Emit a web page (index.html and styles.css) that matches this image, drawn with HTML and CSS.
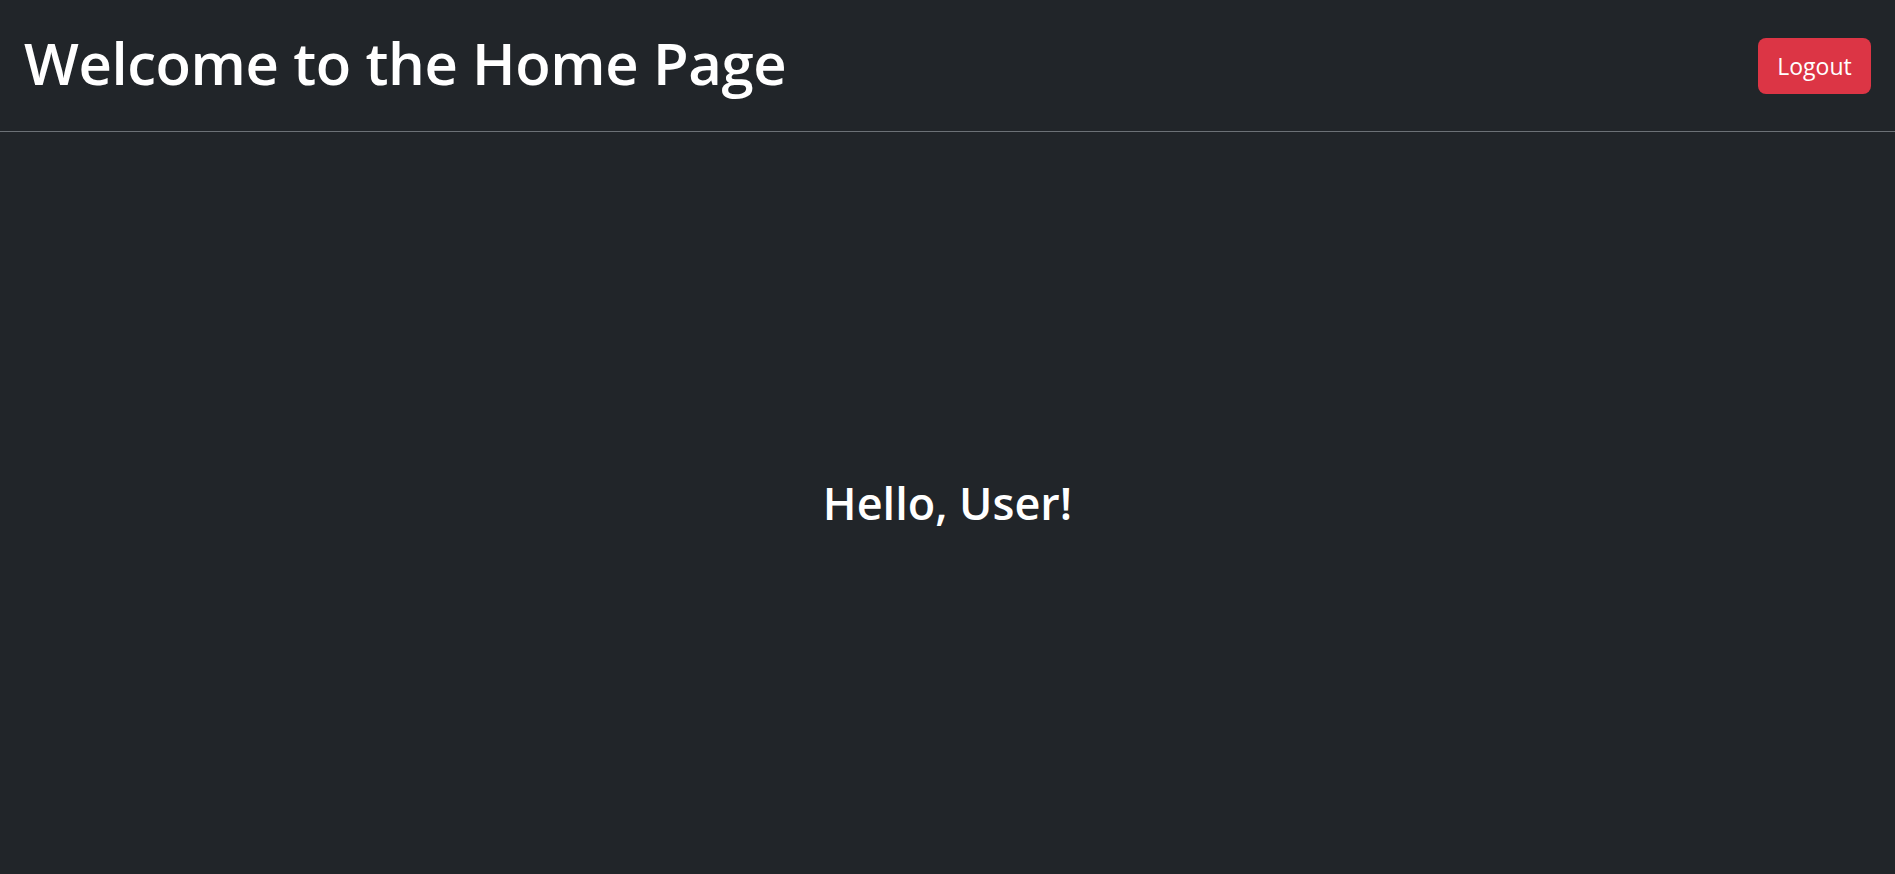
FILE: index.html
```html
<!DOCTYPE html>
<html lang="en">
<head>
<meta charset="utf-8">
<title>Home</title>
<link rel="stylesheet" href="styles.css">
</head>
<body>
<div class="page">
  <header class="topbar">
    <h1 class="title">Welcome to the Home Page</h1>
    <button class="logout" type="button">Logout</button>
  </header>
  <main class="content">
    <h2 class="greeting">Hello, User!</h2>
  </main>
</div>
</body>
</html>
```

FILE: styles.css
```css
html, body {
  margin: 0;
  padding: 0;
  height: 100%;
  background: #212529;
  color: #ffffff;
  font-family: "Open Sans", "Noto Sans", sans-serif;
}

.page {
  display: flex;
  flex-direction: column;
  height: 100vh;
}

.topbar {
  height: 131px;
  box-sizing: content-box;
  display: flex;
  align-items: center;
  justify-content: space-between;
  padding: 0 24px 0 24px;
  border-bottom: 1px solid #6c7176;
}

.title {
  margin: 0 0 6px 0;
  font-size: 58px;
  font-weight: 600;
  line-height: 1.2;
  letter-spacing: -0.4px;
}

.logout {
  background: #dc3545;
  color: #ffffff;
  border: none;
  border-radius: 8px;
  width: 113px;
  height: 56px;
  font-family: inherit;
  font-size: 23px;
  cursor: pointer;
}

.content {
  flex: 1;
  display: flex;
  align-items: center;
  justify-content: center;
}

.greeting {
  margin: 0;
  font-size: 45px;
  font-weight: 600;
  line-height: 1.2;
  letter-spacing: 0;
}
```
